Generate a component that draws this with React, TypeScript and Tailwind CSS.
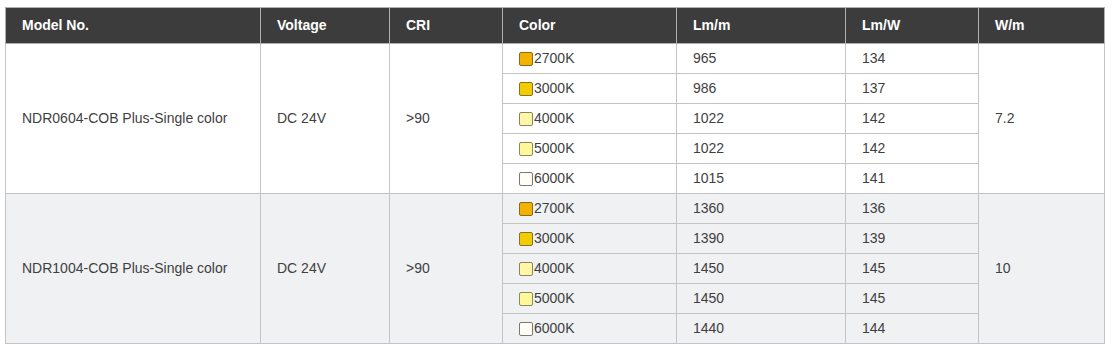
const groups = [
  {
    model: "NDR0604-COB Plus-Single color",
    voltage: "DC 24V",
    cri: ">90",
    wm: "7.2",
    bg: "bg-white",
    rows: [
      { cct: "2700K", lmm: "965", lmw: "134" },
      { cct: "3000K", lmm: "986", lmw: "137" },
      { cct: "4000K", lmm: "1022", lmw: "142" },
      { cct: "5000K", lmm: "1022", lmw: "142" },
      { cct: "6000K", lmm: "1015", lmw: "141" },
    ],
  },
  {
    model: "NDR1004-COB Plus-Single color",
    voltage: "DC 24V",
    cri: ">90",
    wm: "10",
    bg: "bg-[#f0f1f3]",
    rows: [
      { cct: "2700K", lmm: "1360", lmw: "136" },
      { cct: "3000K", lmm: "1390", lmw: "139" },
      { cct: "4000K", lmm: "1450", lmw: "145" },
      { cct: "5000K", lmm: "1450", lmw: "145" },
      { cct: "6000K", lmm: "1440", lmw: "144" },
    ],
  },
];

const swatch: Record<string, string> = {
  "2700K": "bg-[#f2b300] border-[#8a6a1a]",
  "3000K": "bg-[#f0cc00] border-[#857228]",
  "4000K": "bg-[#fff6a6] border-[#8a8460]",
  "5000K": "bg-[#fff89a] border-[#8a8a60]",
  "6000K": "bg-[#fffef6] border-[#7a7a72]",
};

const heads = [
  { label: "Model No.", w: "w-[255px]" },
  { label: "Voltage", w: "w-[129px]" },
  { label: "CRI", w: "w-[113px]" },
  { label: "Color", w: "w-[174px]" },
  { label: "Lm/m", w: "w-[169px]" },
  { label: "Lm/W", w: "w-[133px]" },
  { label: "W/m", w: "w-[126px]" },
];

const cell = "border border-[#c4c4c4] pl-[16px] text-left align-middle";

export default function App() {
  return (
    <div className="w-[1113px] h-[350px] bg-white pt-[7px] pl-[5px] font-['Liberation_Sans',Arial,sans-serif] text-[14px] text-[#3f3f3f]">
      <table className="border-collapse table-fixed w-[1100px]">
        <thead>
          <tr className="h-[36px] bg-[#3c3c3c] text-white">
            {heads.map((h) => (
              <th key={h.label} className={`${h.w} border border-[#b0b0b0] pl-[16px] text-left font-bold`}>
                {h.label}
              </th>
            ))}
          </tr>
        </thead>
        <tbody>
          {groups.map((g) =>
            g.rows.map((r, i) => (
              <tr key={g.model + r.cct} className={`h-[30px] ${g.bg}`}>
                {i === 0 && (
                  <>
                    <td rowSpan={5} className={cell}>{g.model}</td>
                    <td rowSpan={5} className={cell}>{g.voltage}</td>
                    <td rowSpan={5} className={cell}>{g.cri}</td>
                  </>
                )}
                <td className={cell}>
                  <div className="flex items-center gap-[1px]">
                    <span className={`inline-block w-[14px] h-[14px] rounded-[2px] border ${swatch[r.cct]}`} />
                    <span>{r.cct}</span>
                  </div>
                </td>
                <td className={cell}>{r.lmm}</td>
                <td className={cell}>{r.lmw}</td>
                {i === 0 && (
                  <td rowSpan={5} className={cell}>{g.wm}</td>
                )}
              </tr>
            ))
          )}
        </tbody>
      </table>
    </div>
  );
}
